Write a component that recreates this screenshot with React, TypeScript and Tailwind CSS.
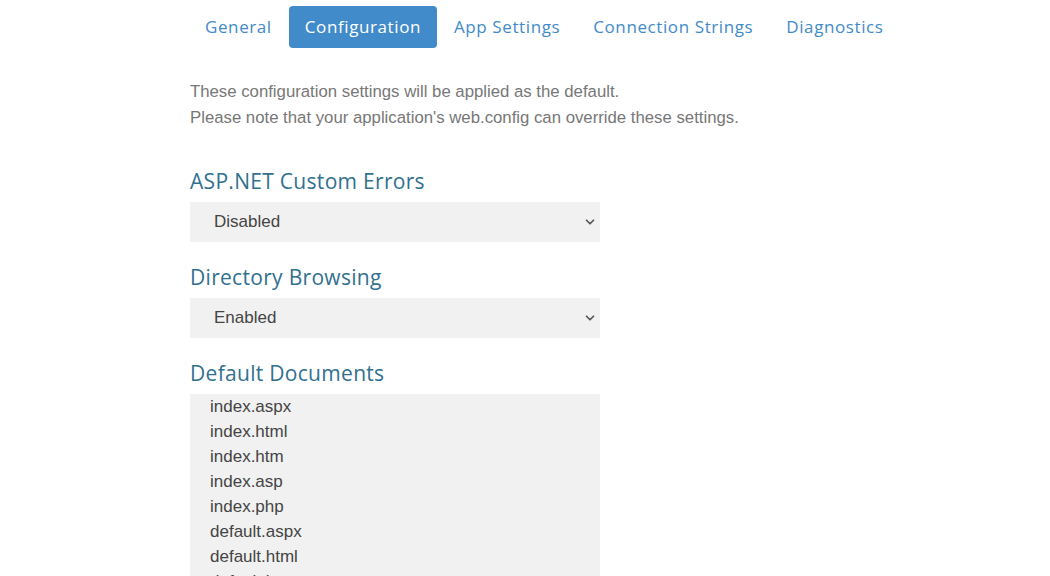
import { ChevronDown } from "lucide-react";

const tabs = ["General", "Configuration", "App Settings", "Connection Strings", "Diagnostics"];

const documents = [
  "index.aspx",
  "index.html",
  "index.htm",
  "index.asp",
  "index.php",
  "default.aspx",
  "default.html",
  "default.htm",
  "default.asp",
];

function Heading({ children }: { children: React.ReactNode }) {
  return (
    <h3 className="text-[21px] leading-[30px] text-[#31708f] font-['Open_Sans',sans-serif] tracking-[0.3px]">
      {children}
    </h3>
  );
}

function FakeSelect({ value }: { value: string }) {
  return (
    <div className="mt-[6px] flex h-[40px] w-[410px] items-center justify-between bg-[#f1f1f1] pl-[24px] pr-[3px] text-[17px] text-[#444]">
      <span>{value}</span>
      <ChevronDown className="h-[14px] w-[14px] text-[#555]" strokeWidth={3} />
    </div>
  );
}

export default function App() {
  return (
    <div className="h-[576px] overflow-hidden bg-white font-['Liberation_Sans',Arial,sans-serif]">
      {/* Tabs */}
      <nav className="flex gap-[1px] pl-[189px] pt-[6px] font-['Open_Sans',sans-serif] text-[17px] tracking-[0.6px]">
        {tabs.map((tab) => (
          <a
            key={tab}
            className={`flex h-[42px] items-center rounded-[4px] px-[16px] ${
              tab === "Configuration" ? "bg-[#428bca] text-white" : "text-[#428bca]"
            }`}
          >
            {tab}
          </a>
        ))}
      </nav>

      <div className="pl-[190px]">
        <p className="mt-[31px] text-[16.75px] leading-[26px] text-[#777]">
          These configuration settings will be applied as the default.
          <br />
          Please note that your application's web.config can override these settings.
        </p>

        <div className="mt-[35px]">
          <Heading>ASP.NET Custom Errors</Heading>
          <FakeSelect value="Disabled" />
        </div>

        <div className="mt-[20px]">
          <Heading>Directory Browsing</Heading>
          <FakeSelect value="Enabled" />
        </div>

        <div className="mt-[20px]">
          <Heading>Default Documents</Heading>
          <ul className="mt-[6px] w-[410px] bg-[#f1f1f1] pl-[20px] text-[17px] leading-[25px] text-[#444]">
            {documents.map((doc) => (
              <li key={doc}>{doc}</li>
            ))}
          </ul>
        </div>
      </div>
    </div>
  );
}
